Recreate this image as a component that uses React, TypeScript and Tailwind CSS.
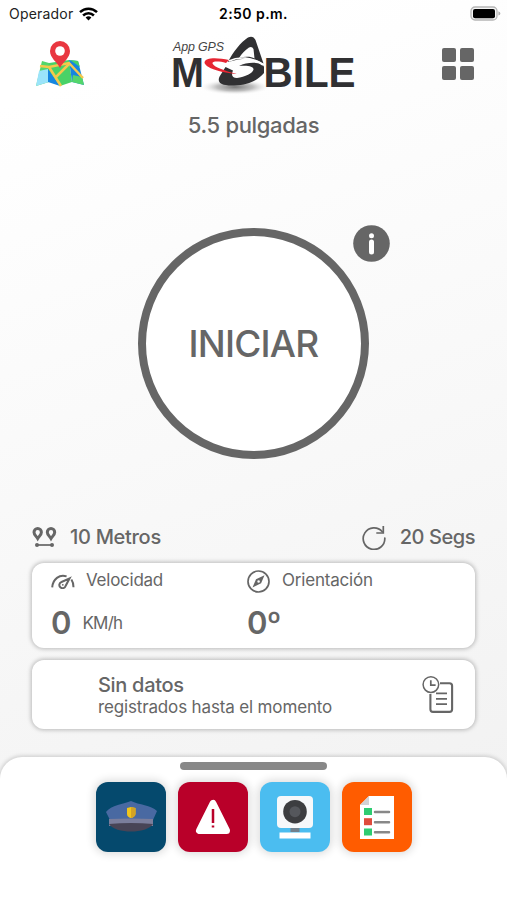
import type { ReactNode } from "react";

function StatusBar() {
  return (
    <div className="grid h-7 shrink-0 grid-cols-3 items-center text-black">
      <div className="flex items-center gap-[6px] pb-px pl-[9px]">
        <span className="text-[14px] tracking-[0.2px] text-[#222]">Operador</span>
        <svg width="19" height="14" viewBox="0 0 19 14" fill="none" stroke="#000" strokeWidth="2.5">
          <path d="M1 5.2C5.8.6 13.2.6 18 5.2" />
          <path d="M4.1 8.5C7.2 5.5 11.8 5.5 14.9 8.5" />
          <path d="M6.6 10.4Q9.5 8 12.4 10.4L9.5 13.4Z" fill="#000" stroke="none" />
        </svg>
      </div>
      <span className="pb-px text-center text-[14px] font-semibold tracking-[0.45px]">2:50 p.m.</span>
      <div className="flex justify-end pr-[6px]">
        <svg width="31" height="16" viewBox="0 0 31 16">
          <rect x="1" y="1" width="26" height="13" rx="4" fill="#f5f5f5" stroke="#b5b5b5" strokeWidth="1.3" />
          <rect x="3" y="3" width="22" height="9.2" rx="2" fill="#000" />
          <path d="M28.4 5.2v4.4q2-.7 2-2.2t-2-2.2" fill="#b0b0b0" />
        </svg>
      </div>
    </div>
  );
}

function MapIcon() {
  return (
    <svg width="50" height="48" viewBox="0 0 50 48">
      <path d="M7 21 14 23V42L1 46Z" fill="#54d66b" />
      <path d="M4 31 13 29 14 42 1 46Z" fill="#9be4fa" />
      <path d="M13 28 25 46 13 42Z" fill="#1686df" />
      <path d="M14 23 34 20 37 42 25 46 13 29Z" fill="#49d267" />
      <path d="M34 20 43 21 49 45 37 42Z" fill="#1686df" />
      <path d="M35 20 43 21 45 27Z" fill="#49d267" />
      <path d="M38 35 47 37 49 45 37 42Z" fill="#54d66b" />
      <path d="M5 26 14 27 34 23 48 38" fill="none" stroke="#f5c84c" strokeWidth="2.5" />
      <path d="M14 27 26 46M35 23 21 37" fill="none" stroke="#f5c84c" strokeWidth="2.5" />
      <path d="M25 28C22 22 15 18 15 11a10 10 0 0 1 20 0C35 18 28 22 25 28Z" fill="#e93740" />
      <circle cx="25" cy="11" r="4.8" fill="#fff" />
    </svg>
  );
}

function Logo() {
  return (
    <svg className="overflow-visible" width="186" height="62" viewBox="0 0 186 62">
      <defs>
        <radialGradient id="logoShade">
          <stop offset="0" stopColor="#777" />
          <stop offset="0.5" stopColor="#aaa" stopOpacity="0.75" />
          <stop offset="1" stopColor="#fff" stopOpacity="0" />
        </radialGradient>
      </defs>
      <ellipse cx="63" cy="51" rx="36" ry="8" fill="url(#logoShade)" />
      <text x="1" y="15" fontFamily="Liberation Sans, sans-serif" fontStyle="italic" fontSize="12.4" textLength="51" fill="#444">App GPS</text>
      <text x="-1" y="50.5" fontFamily="Liberation Sans, sans-serif" fontWeight="700" fontSize="42" textLength="33" lengthAdjust="spacingAndGlyphs" fill="#303032">M</text>
      <text x="91.5" y="50.5" fontFamily="Liberation Sans, sans-serif" fontWeight="700" fontSize="42" textLength="92" lengthAdjust="spacingAndGlyphs" fill="#303032">BILE</text>
      <path fillRule="evenodd" fill="#303032" d="M56 26C61 16 69 6 76 1.5Q81-1 83.5 4L91.5 27.5C84 23 76 21.5 66 23.5ZM67 22C73 20.3 79 20.5 82.5 22.5L81.5 13Q80 10 77 11.5C73 14 69.5 18 67 22Z" />
      <path fillRule="evenodd" fill="#303032" d="M53.5 31 61 34.5C59 39 60 42 65 42C73 41 81 37 81.5 33.5C82 30.5 76 29 67 30C76 25 91 26 92 31V37C86 44 77 49 62 49.5C48 50 44 46 48.5 39Z" />
      <path fillRule="evenodd" fill="#e62532" d="M65 38C47 36.5 33 31.5 32.5 26.5C33 21 46 21.5 57 24L54 27C47 25 40 25 40.5 27.5C42 31 52 34.5 65 38Z" />
      <path d="M57 25C66 20.5 80 20.5 91 29" fill="none" stroke="#fff" strokeWidth="1.7" />
    </svg>
  );
}

function PinsIcon() {
  return (
    <svg width="25" height="21" viewBox="0 0 25 21" fill="none" stroke="#666">
      <g strokeWidth="3">
        <path d="M5.7 11.5C4.5 9.5 2 7.9 2 5.2a3.7 3.7 0 0 1 7.4 0C9.4 7.9 6.9 9.5 5.7 11.5Z" />
        <path d="M19 11.5c-1.2-2-3.7-3.6-3.7-6.3a3.7 3.7 0 0 1 7.4 0C22.7 7.9 20.2 9.5 19 11.5Z" />
      </g>
      <path d="M5 18h15" strokeWidth="1.7" />
      <circle cx="5" cy="18" r="2" fill="#666" stroke="none" />
      <circle cx="20" cy="18" r="2" fill="#666" stroke="none" />
    </svg>
  );
}

function RefreshIcon() {
  return (
    <svg width="24" height="25" viewBox="0 0 24 25" fill="none" stroke="#666" strokeWidth="1.7">
      <path d="M20.3 6.7A10.8 10.8 0 1 0 22.8 13" strokeLinecap="round" />
      <path d="M21.3 1v7h-7" />
    </svg>
  );
}

function GaugeIcon() {
  return (
    <svg width="24" height="15" viewBox="0 0 24 15" fill="none" stroke="#666" strokeWidth="2">
      <path d="M1.2 13.4C1.8 5 8.5.1 15.6 2.4M20.4 5.5C21.9 7.7 22.5 10 22.5 13.3" />
      <path d="M18.6 4.3 10.5 8a3.2 3.2 0 1 0 4.1 4Z" strokeWidth="2" />
      <circle cx="11.8" cy="10.8" r="0.9" fill="#666" stroke="none" />
    </svg>
  );
}

function CompassIcon() {
  return (
    <svg width="23" height="23" viewBox="0 0 23 23">
      <circle cx="11.5" cy="11.5" r="10.5" fill="none" stroke="#666" strokeWidth="1.7" />
      <path fillRule="evenodd" fill="#666" d="M17.5 5.2 14.1 13.3 5.5 17.5 9 9.2ZM11.6 10.2a1.3 1.3 0 1 0 0 2.6 1.3 1.3 0 0 0 0-2.6Z" />
    </svg>
  );
}

function HistoryIcon() {
  return (
    <svg width="32" height="38" viewBox="0 0 32 38" fill="none" stroke="#666">
      <path d="M18 7.2h9.5q2.6 0 2.6 2.6v23.5q0 2.6-2.6 2.6H11q-2.6 0-2.6-2.6V18" strokeWidth="2.1" />
      <circle cx="8.9" cy="8.6" r="7.8" strokeWidth="1.5" />
      <path d="M8.8 4.2v4.9h4.8M14 17.3h11M14 22.9h11M14 28.2h11" strokeWidth="1.7" />
    </svg>
  );
}

function Tile({ color, children }: { color: string; children: ReactNode }) {
  return (
    <div className={`h-[70px] w-[70px] rounded-[12px] shadow-[0_0_9px_2px_rgba(0,0,0,0.14)] ${color}`}>
      <svg width="70" height="70" viewBox="0 0 70 70">{children}</svg>
    </div>
  );
}

export default function App() {
  return (
    <main className="flex h-[900px] w-[507px] flex-col overflow-hidden bg-linear-160 from-white from-10% to-[#f2f2f2] to-90% font-['Inter',sans-serif] text-[#666]">
      <StatusBar />

      <header className="flex h-[76px] shrink-0 items-start">
        <div className="w-[172px] pt-[12px] pl-[35px]"><MapIcon /></div>
        <div className="w-[186px] pt-[8px]"><Logo /></div>
        <div className="grid grid-cols-2 gap-[3.5px] pt-[20px] pl-[84px]">
          {[0, 1, 2, 3].map((i) => (
            <span key={i} className="h-[14px] w-[14px] rounded-[2px] bg-[#666]" />
          ))}
        </div>
      </header>

      <h1 className="h-[42px] shrink-0 text-center text-[22px] leading-[42px] font-medium tracking-[-0.33px]">5.5 pulgadas</h1>

      <section className="flex h-[377px] shrink-0 justify-center pt-[82px]">
        <div className="relative h-[231px] w-[231px]">
          <button className="h-[231px] w-[231px] rounded-full border-[8px] border-[#666] bg-white text-[37px] font-medium tracking-[-0.8px]">
            INICIAR
          </button>
          <svg className="absolute top-[-3px] left-[215px]" width="37" height="37" viewBox="0 0 37 37">
            <circle cx="18.5" cy="18.5" r="18.3" fill="#666" />
            <circle cx="18.5" cy="10.7" r="2.5" fill="#fff" />
            <path d="M18.5 17v10" stroke="#fff" strokeWidth="5" strokeLinecap="round" />
          </svg>
        </div>
      </section>

      <div className="flex h-[40px] shrink-0 items-start justify-between pr-[32px] pl-[32px] text-[20px] leading-[28px] font-medium tracking-[-0.3px]">
        <div className="flex items-center gap-[13px]">
          <PinsIcon />
          <span>10 Metros</span>
        </div>
        <div className="flex items-center gap-[14px]">
          <RefreshIcon />
          <span className="tracking-[-0.45px]">20 Segs</span>
        </div>
      </div>

      <section className="mx-[32px] flex h-[85px] shrink-0 rounded-[12px] bg-white shadow-[0_0_4px_1px_rgba(0,0,0,0.25)]">
        <div className="w-[215px] pl-[19px]">
          <div className="flex h-[36px] items-center gap-[11px] text-[17px] tracking-[-0.25px]">
            <GaugeIcon />
            <span>Velocidad</span>
          </div>
          <div className="flex h-[49px] items-center gap-[11px]">
            <span className="text-[31px] font-semibold">0</span>
            <span className="text-[17px] tracking-[-0.8px]">KM/h</span>
          </div>
        </div>
        <div>
          <div className="flex h-[36px] items-center gap-[12px] text-[17px] tracking-[-0.2px]">
            <CompassIcon />
            <span>Orientación</span>
          </div>
          <div className="flex h-[49px] items-center text-[31px] font-semibold tracking-[-0.6px]">0º</div>
        </div>
      </section>

      <section className="mx-[32px] mt-[12px] flex h-[69px] shrink-0 items-start justify-between rounded-[12px] bg-white pr-[21px] pl-[66px] shadow-[0_0_4px_1px_rgba(0,0,0,0.25)]">
        <div className="pt-[13px]">
          <p className="text-[20px] leading-[24px] font-medium tracking-[-0.3px]">Sin datos</p>
          <p className="text-[17px] leading-[20px] tracking-[-0.15px]">registrados hasta el momento</p>
        </div>
        <div className="pt-[16px]"><HistoryIcon /></div>
      </section>

      <footer className="mt-[28px] flex flex-1 flex-col items-center rounded-t-[22px] bg-white pt-[5px] shadow-[0_0_4px_1px_rgba(0,0,0,0.18)]">
        <div className="h-[8px] w-[147px] shrink-0 rounded-full bg-[#888]" />
        <nav className="mt-[12px] flex gap-[12px]">
          <Tile color="bg-[#05496d]">
            <path d="M10 30C15 23 28 22 35 19C43 23 55 23 61 29L57 38H14Z" fill="#4969a2" />
            <path d="M13 37Q35 36 57 37V44H13Z" fill="#7b7e9c" />
            <path d="M13 42Q35 40 57 42C51 52 19 52 13 42Z" fill="#484456" />
            <path d="M31 26 35 25 39.5 26V32Q39 35 35 36Q31 35 31 32Z" fill="#f1c51b" />
            <path d="M35 25 39.5 26V32Q39 35 35 36Z" fill="#d3a324" />
          </Tile>
          <Tile color="bg-[#b90029]">
            <path d="M35 21.5 21.5 48.5H48.5Z" fill="#fff" stroke="#fff" strokeWidth="7" strokeLinejoin="round" />
            <path d="M35 27v14M35 43.5v2" stroke="#b90029" strokeWidth="2.5" />
          </Tile>
          <Tile color="bg-[#4bbdf0]">
            <rect x="17" y="14" width="36" height="32" rx="4" fill="#f6f8fa" />
            <rect x="30.5" y="46" width="9" height="4" fill="#71808c" />
            <rect x="19.5" y="50.5" width="31" height="6" fill="#fff" />
            <circle cx="35" cy="29.7" r="11.8" fill="#3c3d40" />
            <circle cx="35" cy="29.7" r="5.5" fill="#55575c" />
          </Tile>
          <Tile color="bg-[#ff5c00]">
            <path d="M27 14H52V57H18V23Z" fill="#fff" />
            <path d="M27 14V23H18Z" fill="#d2d2d4" />
            <path d="M22 26h8v7h-8zM22 46.5h8v7h-8z" fill="#2ecc71" />
            <path d="M22 36.2h8v7h-8z" fill="#df4b3c" />
            <path d="M33 30h14M33 40.2h14M33 50.2h14" stroke="#888" strokeWidth="2.5" strokeLinecap="round" />
          </Tile>
        </nav>
      </footer>
    </main>
  );
}
